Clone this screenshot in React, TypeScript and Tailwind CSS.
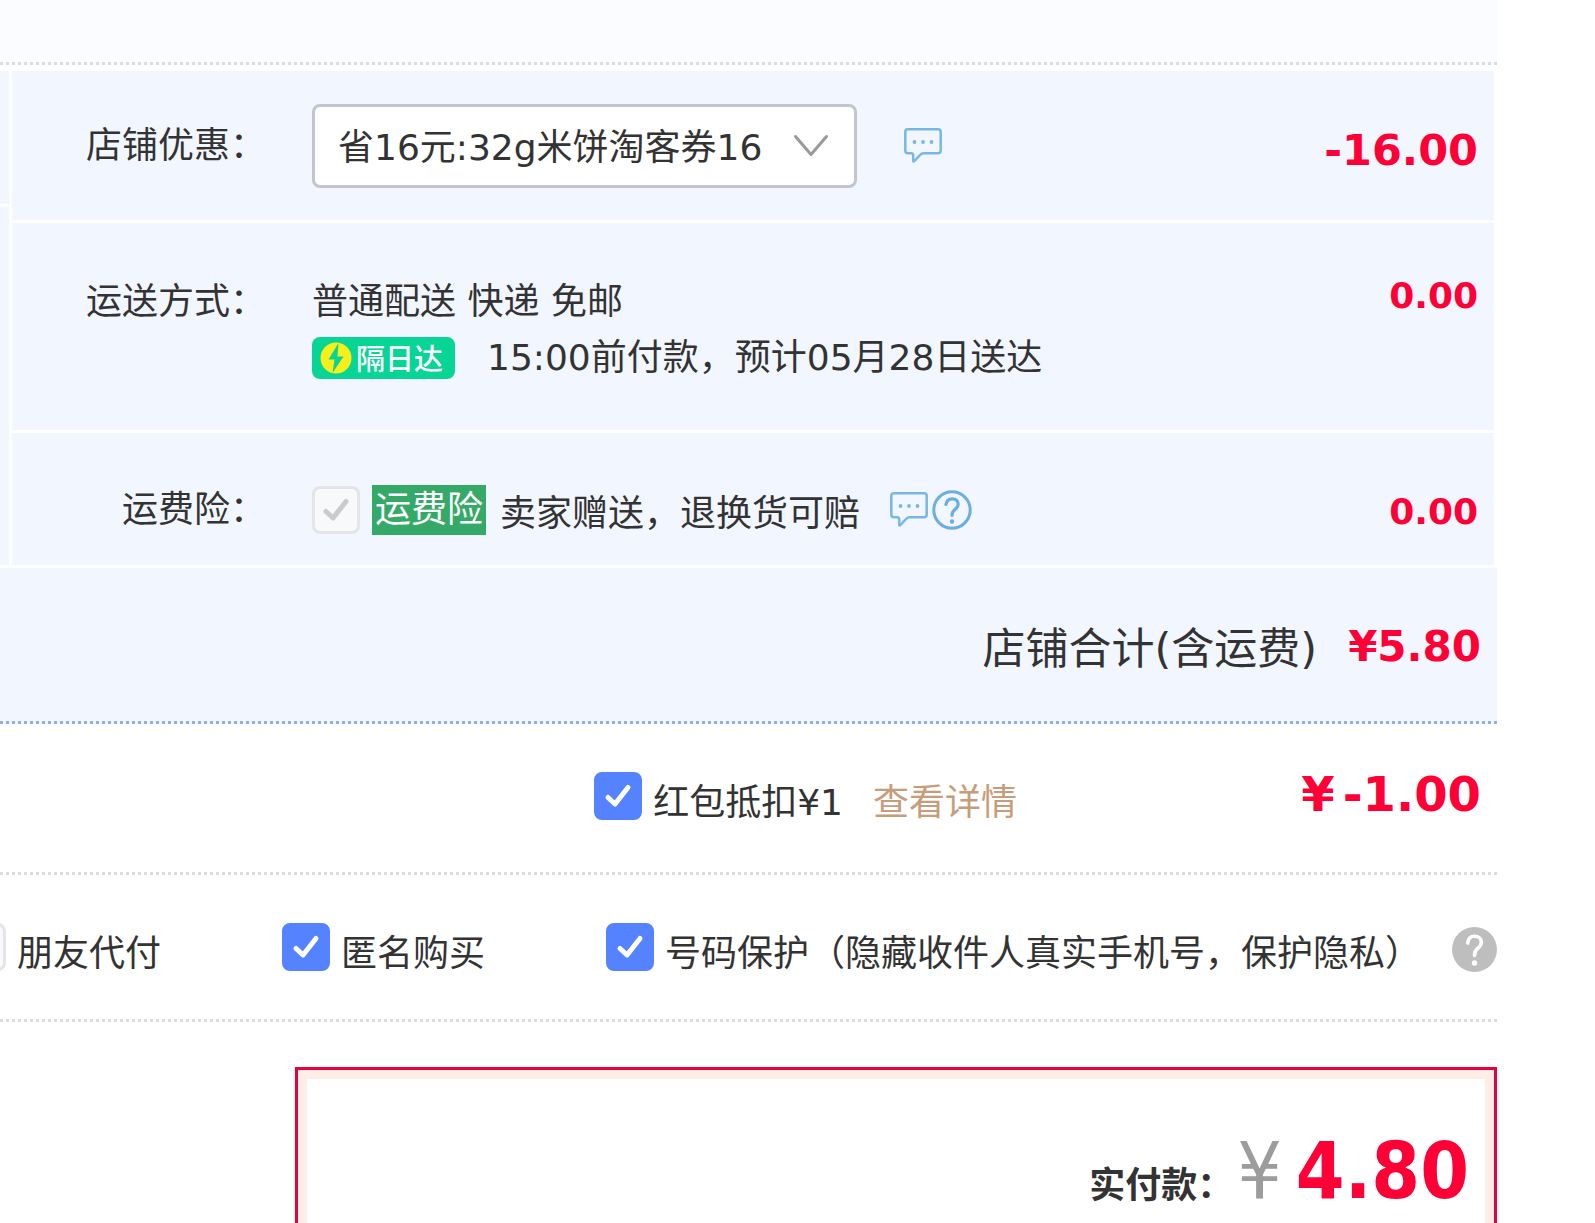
import { useState } from "react";
import type { ReactNode } from "react";

function CommentIcon() {
  return (
    <svg className="h-[36px] w-[38px] shrink-0" viewBox="0 0 38 36" fill="none" aria-hidden="true">
      <path
        d="M4 1.300H34Q36.700 1.300 36.700 4V22.500Q36.700 25.300 34 25.300H20Q17.500 25.300 16 27L10.500 33Q9.200 34.400 9.200 32.500V27.500Q9.200 25.300 7 25.300H4Q1.300 25.300 1.300 22.500V4Q1.300 1.300 4 1.300Z"
        stroke="#76b7e6"
        strokeWidth="2.500"
        strokeLinejoin="round"
      />
      <circle cx="10.500" cy="14" r="1.900" fill="#76b7e6" />
      <circle cx="19" cy="14" r="1.900" fill="#76b7e6" />
      <circle cx="27.500" cy="14" r="1.900" fill="#76b7e6" />
    </svg>
  );
}

function HelpOutlineIcon() {
  return (
    <svg className="size-10 shrink-0" viewBox="0 0 40 40" fill="none" aria-hidden="true">
      <circle cx="20" cy="20" r="18.200" stroke="#6aafe0" strokeWidth="3" />
      <path
        d="M14 14.500C14.500 10.700 17 8.800 20.200 8.800C23.700 8.800 26.200 11 26.200 14.200C26.200 16.600 25 18 23 19.600C20.900 21.300 20 22.400 20 25.500"
        stroke="#6aafe0"
        strokeWidth="3.200"
        strokeLinecap="round"
      />
      <circle cx="20" cy="31.500" r="2.200" fill="#6aafe0" />
    </svg>
  );
}

function HelpSolidIcon() {
  return (
    <svg className="size-[45px] shrink-0" viewBox="0 0 45 45" fill="none" aria-hidden="true">
      <circle cx="22.500" cy="22.500" r="22.500" fill="#bebebe" />
      <path
        d="M15.800 16C16.200 11.600 19 9.300 22.600 9.300C26.600 9.300 29.300 11.700 29.300 15.200C29.300 17.800 28 19.400 25.800 21.200C23.400 23.200 22.500 24.600 22.500 28.500"
        stroke="#fff"
        strokeWidth="3.600"
        strokeLinecap="round"
      />
      <circle cx="22.500" cy="36" r="2.700" fill="#fff" />
    </svg>
  );
}

type CheckProps = {
  id: string;
  defaultChecked?: boolean;
  disabled?: boolean;
};

function Check({ id, defaultChecked, disabled }: CheckProps) {
  return (
    <span className="relative size-12 shrink-0">
      <input
        id={id}
        type="checkbox"
        defaultChecked={defaultChecked}
        disabled={disabled}
        className="peer block size-12 appearance-none rounded-lg border-[3px] border-[#e4e5e9] bg-[#f8f9fa] enabled:checked:border-[#5583ff] enabled:checked:bg-[#5583ff]"
      />
      <svg
        className="pointer-events-none absolute inset-0 size-12 text-white opacity-0 peer-checked:opacity-100 peer-disabled:text-[#cbcbcb]"
        viewBox="0 0 48 48"
        fill="none"
        aria-hidden="true"
      >
        <path
          d="M14 25.500L21 32L34 15.500"
          stroke="currentColor"
          strokeWidth="5"
          strokeLinecap="round"
          strokeLinejoin="round"
        />
      </svg>
    </span>
  );
}

function Option({ id, label, checked }: { id: string; label: string; checked?: boolean }) {
  return (
    <div className="flex shrink-0 items-center gap-[11px]">
      <Check id={id} defaultChecked={checked} />
      <label htmlFor={id} className="pt-[14px] whitespace-nowrap">
        {label}
      </label>
    </div>
  );
}

function NextDayBadge() {
  return (
    <span className="flex h-[42px] w-[143px] items-center gap-1 rounded-lg bg-[#06d595] pl-2">
      <svg className="size-8 shrink-0" viewBox="0 0 32 32" aria-hidden="true">
        <circle cx="16" cy="16" r="15.500" fill="#f8ef1a" />
        <path d="M18.500 1L8.500 17.500H14.500L12.500 31L23.500 14.500H17.500Z" fill="#06d595" />
      </svg>
      <span className="pt-1 text-[29px] leading-[38px] font-medium whitespace-nowrap text-white">隔日达</span>
    </span>
  );
}

function Row({ label, children, price, className }: { label: ReactNode; children: ReactNode; price: ReactNode; className: string }) {
  return (
    <div className={`flex bg-[#f2f6ff] pr-4 ${className}`}>
      <div className="w-[254px] shrink-0 text-right leading-[56px]">{label}</div>
      <div className="ml-[46px] flex-1">{children}</div>
      <div className="font-bold text-[#ff0036]">{price}</div>
    </div>
  );
}

export default function App() {
  const [coupon, setCoupon] = useState("c16");
  return (
    <main
      lang="zh-CN"
      className="h-screen overflow-hidden bg-white pr-[98px] font-['DejaVu_Sans','Noto_Sans_CJK_SC',sans-serif] text-[36px] leading-[48px] text-[#333]"
    >
      <div className="h-[65px] border-b-[3px] border-dotted border-[#dcdcdc] bg-[#fbfcff]" />

      <section className="mt-[6px] flex gap-[3px] pr-[3px]">
        <div className="flex w-[9px] shrink-0 flex-col gap-[3px]">
          <div className="h-[133px] bg-[#f2f6ff]" />
          <div className="flex-1 bg-[#f2f6ff]" />
        </div>
        <div className="flex flex-1 flex-col gap-[3px]">
          <Row
            className="items-center pt-[33px] pb-8"
            label={<label htmlFor="coupon">店铺优惠：</label>}
            price={<p className="pt-2 text-[43px]">-16.00</p>}
          >
            <div className="flex items-center gap-[47px]">
              <div className="relative w-[545px]">
                <select
                  id="coupon"
                  value={coupon}
                  onChange={(e) => setCoupon(e.target.value)}
                  className="block h-[84px] w-full appearance-none rounded-lg border-[3px] border-[#c2c4ce] bg-white pt-1 pr-20 pl-[23px]"
                >
                  <option value="c16">省16元:32g米饼淘客券16</option>
                  <option value="none">不使用优惠</option>
                </select>
                <svg
                  className="pointer-events-none absolute top-[30px] right-7 h-6 w-9"
                  viewBox="0 0 36 24"
                  fill="none"
                  aria-hidden="true"
                >
                  <path d="M2.500 2.500L18 20.500L33.500 2.500" stroke="#999" strokeWidth="3" strokeLinecap="round" strokeLinejoin="round" />
                </svg>
              </div>
              <button type="button" aria-label="优惠说明">
                <CommentIcon />
              </button>
            </div>
          </Row>

          <Row
            className="items-start pt-[51px] pb-11"
            label="运送方式："
            price={<p className="leading-[44px]">0.00</p>}
          >
            <p className="leading-[56px]">普通配送 快递 免邮</p>
            <div className="flex items-center gap-8 leading-[56px]">
              <NextDayBadge />
              <p className="whitespace-nowrap">15:00前付款，预计05月28日送达</p>
            </div>
          </Row>

          <Row
            className="items-center pt-[49px] pb-[27px]"
            label={<label htmlFor="insurance">运费险：</label>}
            price={<p className="pt-1">0.00</p>}
          >
            <div className="flex items-center">
              <Check id="insurance" defaultChecked disabled />
              <mark className="ml-3 bg-[#35aa68] px-[3px] leading-[50px] text-white">运费险</mark>
              <p className="ml-[14px] pt-2 whitespace-nowrap">卖家赠送，退换货可赔</p>
              <div className="ml-[30px] flex items-center gap-1">
                <button type="button" aria-label="运费险说明">
                  <CommentIcon />
                </button>
                <button type="button" aria-label="帮助">
                  <HelpOutlineIcon />
                </button>
              </div>
            </div>
          </Row>
        </div>
      </section>

      <section className="mt-[3px] flex h-[156px] items-center justify-end gap-[31px] border-b-[3px] border-dotted border-[#8fb0e8] bg-[#f2f6ff] pt-1 pr-4">
        <span className="pt-1 text-[43px]">店铺合计(含运费)</span>
        <strong className="text-[42px] text-[#ff0036]">¥5.80</strong>
      </section>

      <section className="flex h-[151px] items-center justify-end border-b-[3px] border-dotted border-[#dcdcdc] pr-4 pb-1">
        <Option id="redpacket" label="红包抵扣¥1" checked />
        <a href="#detail" className="ml-[30px] pt-[14px] whitespace-nowrap text-[#c69c7a]">
          查看详情
        </a>
        <strong className="flex w-[464px] justify-end gap-2 pb-1 text-[48px] text-[#ff0036]">
          <span>¥</span>
          <span>-1.00</span>
        </strong>
      </section>

      <section className="flex h-[147px] items-center justify-end border-b-[3px] border-dotted border-[#dcdcdc]">
        <div className="flex gap-[121px]">
          <Option id="friend" label="朋友代付" />
          <Option id="anonymous" label="匿名购买" checked />
          <Option id="protect" label="号码保护（隐藏收件人真实手机号，保护隐私）" checked />
        </div>
        <button type="button" aria-label="号码保护说明" className="ml-[31px] shrink-0 pt-1">
          <HelpSolidIcon />
        </button>
      </section>

      <section className="mt-[45px] ml-[295px] border-[3px] border-[#e6003e]">
        <div className="border-[9px] border-[#ffeee8] pt-12 pr-4 pb-20">
          <p className="flex items-baseline justify-end font-['DejaVu_Sans_Condensed','DejaVu_Sans','Noto_Sans_CJK_SC',sans-serif] leading-[88px]">
            <span className="font-bold">实付款：</span>
            <span className="ml-1 text-[78px] text-[#9c9c9c]">¥</span>
            <strong className="ml-[14px] text-[78px] text-[#ff0036]">4.80</strong>
          </p>
        </div>
      </section>
    </main>
  );
}
